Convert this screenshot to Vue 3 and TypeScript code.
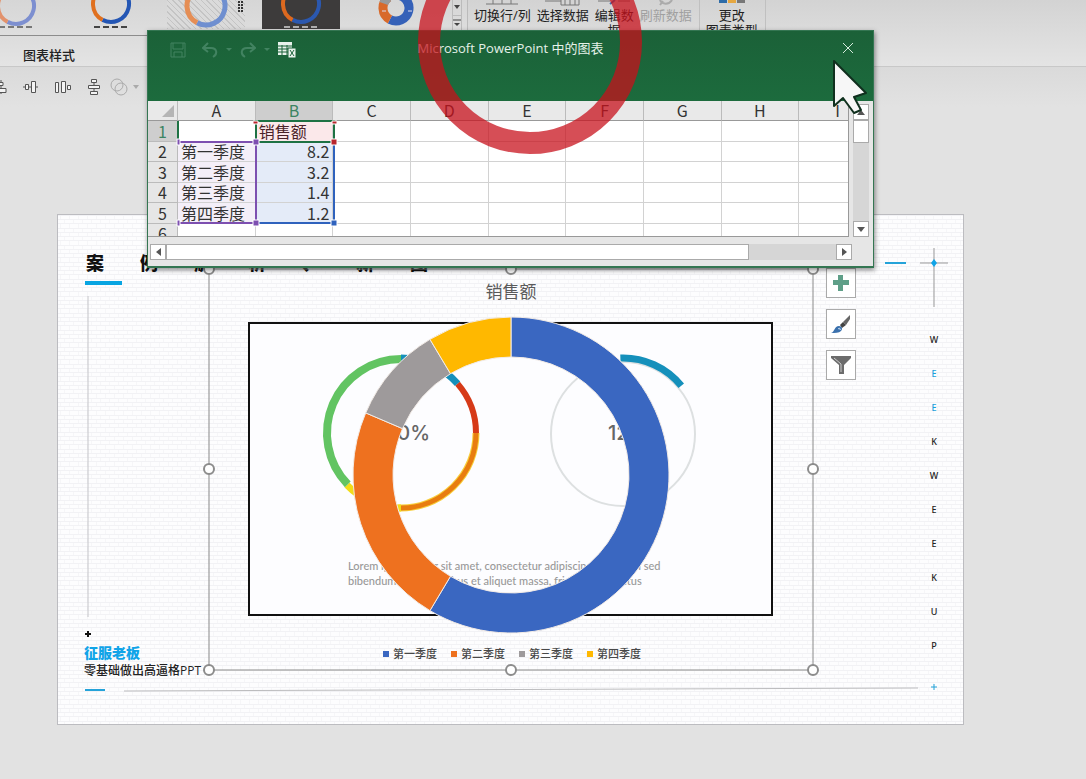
<script setup lang="ts">
interface Quarter { name: string; value: number; color: string }

const quarters: Quarter[] = [
  { name: '第一季度', value: 8.2, color: '#3a67c1' },
  { name: '第二季度', value: 3.2, color: '#ee711f' },
  { name: '第三季度', value: 1.4, color: '#9e9a9b' },
  { name: '第四季度', value: 1.2, color: '#ffb800' },
]

const point = (cx: number, cy: number, r: number, deg: number): string => {
  const a = (deg * Math.PI) / 180
  return `${(cx + r * Math.sin(a)).toFixed(2)} ${(cy - r * Math.cos(a)).toFixed(2)}`
}

const arc = (cx: number, cy: number, r: number, from: number, to: number): string =>
  `M${point(cx, cy, r, from)} A${r} ${r} 0 ${to - from > 180 ? 1 : 0} 1 ${point(cx, cy, r, to)}`

const wedge = (cx: number, cy: number, outer: number, inner: number, from: number, to: number): string => {
  const large = to - from > 180 ? 1 : 0
  return `M${point(cx, cy, outer, from)} A${outer} ${outer} 0 ${large} 1 ${point(cx, cy, outer, to)} ` +
    `L${point(cx, cy, inner, to)} A${inner} ${inner} 0 ${large} 0 ${point(cx, cy, inner, from)} Z`
}

const total = quarters.reduce((sum, q) => sum + q.value, 0)
let angle = 0
const slices = quarters.map((q) => {
  const start = angle
  angle += (q.value / total) * 360
  return { color: q.color, d: wedge(302, 206, 158, 118, start, angle) }
})

const columns = ['A', 'B', 'C', 'D', 'E', 'F', 'G', 'H', 'I']
const rows: string[][] = [
  ['', '销售额'],
  ...quarters.map((q) => [q.name, q.value.toFixed(1)]),
  ['', ''],
]

const thumbs = [
  { kind: 'plain faded', cy: 6, r: 18, w: 4, left: '#e2926c', right: '#7d8fd0' },
  { kind: 'plain', cy: 4, r: 18, w: 4, left: '#e0701f', right: '#2456b4' },
  { kind: 'hatched', cy: 6, r: 19, w: 5, left: '#e58e55', right: '#6f8fd0' },
  { kind: 'dark', cy: 4, r: 18, w: 4, left: '#dd691f', right: '#2b58b0' },
  { kind: 'solid', cy: 8, r: 13, w: 9, left: '#d8692a', right: '#3561b8' },
]

const title = ['案', '例', '解', '析', '、', '新', '图']
const letters = 'WEEKWEEKUP'.split('')
const handles = [
  [0, 0], [302, 0], [604, 0], [0, 200], [604, 200], [0, 401], [302, 401], [604, 401],
]
</script>

<template>
  <div class="app">
    <header class="ribbon">
      <section class="styles-group">
        <div class="gallery">
          <button v-for="(t, i) in thumbs" :key="i" class="thumb" :class="t.kind" :aria-label="`样式 ${i + 1}`">
            <svg width="78" height="29" viewBox="0 0 78 29" fill="none">
              <path :d="arc(39, t.cy, t.r, 0, 208)" :stroke="t.right" :stroke-width="t.w" />
              <path :d="arc(39, t.cy, t.r, 208, 325)" :stroke="t.left" :stroke-width="t.w" />
              <path v-if="t.kind === 'solid'" :d="arc(39, t.cy, t.r, 290, 325)" stroke="#999" :stroke-width="t.w" />
              <path v-if="t.kind === 'solid'" d="M25 11h4M51 11h4" stroke="#dde" />
              <path v-if="t.kind !== 'solid' && t.kind !== 'hatched'" d="M22 27h33" :stroke="t.kind === 'dark' ? '#bbb' : '#333'" stroke-width="2" stroke-dasharray="6 3" :opacity="t.kind === 'plain faded' ? 0.6 : 0.9" />
              <path v-if="t.kind === 'hatched'" d="M72 1v12M75 1v12" stroke="#333" stroke-width="2" stroke-dasharray="2 1" />
            </svg>
          </button>
          <div class="gallery-nav">
            <button aria-label="向下"><svg width="8" height="6"><path d="M1 1h6L4 5z" fill="#444" /></svg></button>
            <button aria-label="更多"><svg width="8" height="8"><path d="M0 1h8" stroke="#444" /><path d="M1 4h6L4 7z" fill="#444" /></svg></button>
          </div>
        </div>
        <h2 class="group-label">图表样式</h2>
      </section>
      <section class="commands data-group">
        <button class="command">
          <svg width="32" height="6"><path d="M0 4h32M7 0v4M16 0v4M25 0v4" stroke="#777" /></svg>
          <span>切换行/列</span>
        </button>
        <button class="command">
          <svg width="36" height="6"><path d="M0 1h16M16 0v5h18V0M20 0v5M25 0v5M30 0v5" stroke="#777" fill="none" /></svg>
          <span>选择数据</span>
        </button>
        <button class="command narrow">
          <svg width="32" height="6"><path d="M0 1h12M20 1h12" stroke="#777" /><path d="M12 4l5-4" stroke="#3c6db0" stroke-width="2" /></svg>
          <span>编辑数据</span>
        </button>
        <button class="command" disabled>
          <svg width="18" height="6"><path d="M3 0c2 5 9 5 12 0M3 5l3-4" stroke="#aaa" stroke-width="2" fill="none" /></svg>
          <span>刷新数据</span>
        </button>
      </section>
      <section class="commands type-group">
        <button class="command">
          <svg width="26" height="6"><path d="M0 0h8v3H0z" fill="#2e6ca8" /><path d="M9 0h8v3H9z" fill="#e6a740" /><path d="M18 0h8v3h-8z" fill="#777" /></svg>
          <span>更改<br>图表类型</span>
        </button>
      </section>
    </header>

    <nav class="quickbar" aria-label="对齐">
      <button aria-label="左对齐"><svg width="8" height="18" fill="#f4f4f4" stroke="#555"><path d="M1 2v14" /><path d="M-3 4.500h6v3h-6zM-3 10.500h9v4h-9z" /></svg></button>
      <button aria-label="水平居中"><svg width="16" height="18" fill="#f4f4f4" stroke="#555"><path d="M0 9h2M6 9h3M13 9h2" /><path d="M2.500 6.500h3v5h-3zM8.500 3.500h4v11h-4z" /></svg></button>
      <button aria-label="横向分布"><svg width="18" height="18" fill="#f4f4f4" stroke="#555"><path d="M1.500 4.500h3v10h-3zM7.500 3.500h4v11h-4zM13.500 7.500h3v4h-3z" /></svg></button>
      <button class="spaced" aria-label="纵向分布"><svg width="14" height="18" fill="#f4f4f4" stroke="#555"><path d="M7 4v10" /><path d="M4.500 1.500h5v3h-5zM1.500 7.500h11v3h-11zM3.500 13.500h7v3h-7z" /></svg></button>
      <button aria-label="合并形状"><svg width="18" height="18" fill="none" stroke="#aaa"><circle cx="7" cy="7" r="6" /><circle cx="11" cy="11" r="6" /></svg></button>
      <button aria-label="更多选项"><svg width="6" height="4"><path d="M0 0h6L3 4z" fill="#aaa" /></svg></button>
    </nav>

    <main class="workspace">
      <article class="slide">
        <svg class="bricks" width="100%" height="100%" aria-hidden="true">
          <defs>
            <pattern id="brick" width="9" height="17" patternUnits="userSpaceOnUse">
              <path d="M0 0h9v1H0zM0 4h9v1H0zM0 8h9v1H0zM0 13h9v1H0z" fill="#f2f2f5" />
              <path d="M2 1h1v3H2zM6 5h1v3H6zM2 9h1v4H2zM6 14h1v3H6z" fill="#f6f6f8" />
            </pattern>
          </defs>
          <rect width="100%" height="100%" fill="url(#brick)" />
        </svg>
        <svg class="decor" width="905" height="509" aria-hidden="true">
          <path d="M27 68h37" stroke="#08a5e2" stroke-width="4" />
          <path d="M30 81v321" stroke="#c4c4c8" />
          <path d="M27 475h20M827 48h21" stroke="#25a3d9" stroke-width="2" />
          <path d="M66 476L860 473" stroke="#bcbcbe" />
          <path d="M862 48h28M876 33v59" stroke="#999" />
          <path d="M876 44l3 4-3 4-3-4z" fill="#10a4e8" />
          <path d="M27 419h6M30 416v6" stroke="#111" stroke-width="2" />
          <path d="M873 472h6M876 469v6" stroke="#25a3d9" />
        </svg>
        <h1 class="slide-title"><span v-for="(c, i) in title" :key="i">{{ c }}</span></h1>
        <ul class="letters">
          <li v-for="(c, i) in letters" :key="i" :class="{ blue: i === 1 || i === 2 }">{{ c }}</li>
        </ul>
        <div class="brand">
          <strong>征服老板</strong>
          <span>零基础做出高逼格PPT</span>
        </div>

        <figure class="picture">
          <svg width="521" height="290" viewBox="250 324 521 290" fill="none">
            <path :d="arc(401, 433, 75, 0, 49)" stroke="#1590bb" stroke-width="7" />
            <path :d="arc(401, 433, 75, 49, 90)" stroke="#d63a18" stroke-width="6" />
            <path :d="arc(401, 433, 75, 90, 182)" stroke="#f8cf3c" stroke-width="7" />
            <path :d="arc(401, 433, 75, 90, 180)" stroke="#e87d10" stroke-width="5" />
            <path :d="arc(401, 433, 75, 180, 226)" stroke="#f2dc18" stroke-width="7" />
            <path :d="arc(401, 433, 74, 226, 360)" stroke="#62c462" stroke-width="8" />
            <circle cx="623" cy="434" r="72" stroke="#dde0e1" stroke-width="2" />
            <path :d="arc(623, 433, 75, 358, 411)" stroke="#1590bb" stroke-width="7" />
            <text class="percent" x="430" y="440" text-anchor="end">100%</text>
            <text class="percent" x="608" y="440">12%</text>
            <text class="lorem" x="348" y="570">Lorem ipsum dolor sit amet, consectetur adipiscing elit. Proin sed</text>
            <text class="lorem" x="348" y="585">bibendum tellus, dapibus et aliquet massa, fringilla nec luctus</text>
          </svg>
        </figure>

        <section class="chart">
          <h2>销售额</h2>
          <svg class="donut" width="604" height="401" role="img" aria-label="销售额圆环图">
            <path v-for="s in slices" :key="s.color" :d="s.d" :fill="s.color" stroke="#f2ebe6" stroke-width="1" stroke-linejoin="round" />
          </svg>
          <ul class="legend">
            <li v-for="q in quarters" :key="q.name"><svg width="6" height="6"><rect width="6" height="6" :fill="q.color" /></svg>{{ q.name }}</li>
          </ul>
          <svg class="frame" width="620" height="417" viewBox="-8 -8 620 417" fill="none" aria-hidden="true">
            <rect width="604" height="401" stroke="#8a8a8a" stroke-width="1" />
            <circle v-for="(h, i) in handles" :key="i" :cx="h[0]" :cy="h[1]" r="5" fill="#fff" stroke="#8c8c8c" stroke-width="2" />
          </svg>
        </section>
        <div class="chart-tools">
          <button aria-label="图表元素"><svg width="16" height="16"><path d="M5 0h5v5h6v5h-6v6H5v-6H0V5h5z" fill="#5f9f88" /></svg></button>
          <button aria-label="图表样式"><svg width="20" height="20"><path d="M19 1L12 8l3 3 4-6z" fill="#666" /><path d="M12 8l-3 3 2 3 4-3z" fill="#444" /><path d="M0 19c4-1 3-7 8-7 3 0 4 3 2 5-2 2-6 2-10 2z" fill="#3b71ad" /><path d="M7 15c1-1 3-1 2 1" stroke="#d9e8f6" fill="none" /></svg></button>
          <button aria-label="图表筛选器"><svg width="20" height="20"><path d="M0 1h20v2l-7 7v9H8v-9L0 3z" fill="#6c6c6c" /><path d="M3 3l7 6v8" stroke="#ccc" fill="none" /></svg></button>
        </div>
      </article>
    </main>

    <section class="window" aria-label="Microsoft PowerPoint 中的图表">
      <div class="titlebar">
        <div class="qat">
          <button aria-label="保存"><svg width="16" height="18" fill="none" stroke="#428361"><path d="M1 2h14v14H1zM3 2v6h10V2M4 16v-5h8v5" /></svg></button>
          <button class="gap-before" aria-label="撤消"><svg width="16" height="16" fill="none" stroke="#428361" stroke-width="2"><path d="M6 1L1 6l5 4M2 6h7c6 0 7 6 2 9" /></svg></button>
          <button aria-label="撤消选项"><svg width="6" height="4"><path d="M0 0h6L3 3z" fill="#428361" /></svg></button>
          <button aria-label="恢复"><svg width="16" height="16" fill="none" stroke="#428361" stroke-width="2"><path d="M10 1l5 5-5 4M14 6H7C1 6 0 12 5 15" /></svg></button>
          <button aria-label="恢复选项"><svg width="6" height="4"><path d="M0 0h6L3 3z" fill="#428361" /></svg></button>
          <button aria-label="编辑数据"><svg width="20" height="18"><path d="M0 1h14v13H0z" fill="#e9f3ec" /><path d="M0 5h14M0 8h14M0 11h14M4 4v10M9 4v10" stroke="#1b6339" /><path d="M10 7h8v10h-8z" fill="#e9f3ec" stroke="#1b6339" /><path d="M12 9l4 6M16 9l-4 6" stroke="#1b6339" /></svg></button>
        </div>
        <h2>Microsoft PowerPoint 中的图表</h2>
        <button class="close" aria-label="关闭"><svg width="12" height="12"><path d="M1 1l10 10M11 1L1 11" stroke="#d6ecdd" /></svg></button>
      </div>
      <div class="sheet-body">
        <div class="sheet-view">
          <table>
            <thead>
              <tr>
                <th class="corner"><svg width="12" height="12"><path d="M12 0v12H0z" fill="#b5b5b5" /></svg></th>
                <th v-for="c in columns" :key="c" :class="{ active: c === 'B' }" scope="col">{{ c }}</th>
              </tr>
            </thead>
            <tbody>
              <tr v-for="(r, i) in rows" :key="i">
                <th scope="row" :class="{ active: i === 0 }">{{ i + 1 }}</th>
                <td v-for="(c, j) in columns" :key="c" :class="{ name: j === 0 && i > 0 && i < 5, series: j === 1 && i === 0, value: j === 1 && i > 0 && i < 5 }">{{ r[j] ?? '' }}</td>
              </tr>
            </tbody>
          </table>
          <svg class="ranges" width="200" height="136" fill="none" aria-hidden="true">
            <path d="M30 20v20M108 20h78v21h-78z" stroke="#1e7244" stroke-width="2" />
            <path d="M30 41h77M108 44v78M30 122h76" stroke="#7d4fb0" stroke-width="2" />
            <path d="M110 122h76V44" stroke="#2f62bd" stroke-width="2" />
            <g stroke="#fff">
              <path d="M105 38h6v6h-6zM105 119h6v6h-6zM29 38h3v6h-3zM29 119h3v6h-3z" fill="#7d4fb0" />
              <path d="M183 119h6v6h-6z" fill="#2f62bd" />
              <path d="M183 38h6v6h-6zM105 20h5v3h-5zM184 20h5v3h-5z" fill="#b8252c" />
            </g>
          </svg>
        </div>
        <div class="vscroll">
          <button aria-label="向上滚动"><svg width="8" height="5"><path d="M0 5h8L4 0z" fill="#555" /></svg></button>
          <div class="thumb-v"></div>
          <button class="end" aria-label="向下滚动"><svg width="8" height="5"><path d="M0 0h8L4 5z" fill="#555" /></svg></button>
        </div>
      </div>
      <div class="hscroll">
        <button aria-label="向左滚动"><svg width="5" height="8"><path d="M5 0v8L0 4z" fill="#555" /></svg></button>
        <div class="thumb-h"></div>
        <button class="end" aria-label="向右滚动"><svg width="5" height="8"><path d="M0 0v8l5-4z" fill="#555" /></svg></button>
      </div>
    </section>

    <svg class="pointer" width="460" height="160" fill="none" aria-hidden="true">
      <circle cx="117" cy="42" r="101" stroke="#c8101b" stroke-opacity="0.74" stroke-width="22" />
      <path d="M421 61v45l9-8 11 15 7-3-7-13 12-4z" fill="#f7f7f7" stroke="#10301e" stroke-width="2" stroke-linejoin="round" />
    </svg>
  </div>
</template>

<style>
body { background: #e2e2e2; }
</style>

<style scoped>
.app {
  position: relative;
  min-height: 100vh;
  overflow: hidden;
  background: #e2e2e2;
  color: #222;
  font-family: "Open Sans", "Noto Sans CJK SC", sans-serif;
  font-size: 13px;
}
.app * { box-sizing: border-box; }
button { padding: 0; border: 0; background: none; font: inherit; color: inherit; display: flex; align-items: center; justify-content: center; }
h1, h2, ul, figure { margin: 0; padding: 0; font-weight: 400; list-style: none; }
svg { display: block; flex: none; }

.ribbon { display: flex; height: 67px; overflow: hidden; background: linear-gradient(#d3d3d3, #e4e4e4); border-bottom: 1px solid #c8c8c8; }
.styles-group { width: 468px; border-right: 1px solid #bbb; }
.gallery { display: flex; gap: 16px; height: 36px; padding-right: 8px; border-bottom: 1px solid #8c8c8c; background: linear-gradient(#d6d6d6, #dedede); }
.thumb { width: 78px; height: 29px; margin-right: 1px; }
.thumb:first-child { margin-left: -23px; }
.thumb.hatched { background: repeating-linear-gradient(45deg, #c4c4c4 0 1px, #dadada 1px 4px); }
.thumb.dark { background: #3d3b3b; }
.gallery-nav { display: flex; flex-direction: column; width: 15px; height: 31px; margin-left: auto; border: 1px solid #bbb; border-top: 0; }
.gallery-nav button { flex: 1; }
.gallery-nav button + button { border-top: 1px solid #bbb; }
.group-label { padding-left: 23px; font-size: 13px; line-height: 38px; font-weight: 500; }
.commands { display: flex; gap: 6px; align-items: flex-start; padding: 0 7px 0 6px; border-right: 1px solid #c0c0c0; }
.command { flex-direction: column; gap: 2px; line-height: 15px; white-space: nowrap; }
.command span { text-align: center; }
.command.narrow span { width: 39px; white-space: normal; }
.command:disabled { color: #a0a0a0; }

.quickbar { display: flex; align-items: center; gap: 15px; height: 40px; background: linear-gradient(#dadada, #e2e2e2); }
.quickbar .spaced { margin-right: -6px; }
.quickbar button:last-child { margin-left: -10px; }

.workspace { padding: 107px 57px 48px; }
.slide { position: relative; width: 907px; height: 511px; border: 1px solid #bcbcc0; background: #fdfdfe; }
.bricks, .decor { position: absolute; left: 0; top: 0; }
.slide-title { position: absolute; left: 28px; top: 36px; display: flex; gap: 36px; font-size: 18px; line-height: 24px; color: #111; }
.slide-title span { width: 18px; font-weight: 900; }
.letters { position: absolute; left: 866px; top: 108px; width: 20px; text-align: center; font-size: 9px; font-weight: 500; line-height: 34px; font-family: "Noto Sans", sans-serif; }
.letters .blue { color: #1ba0dc; }
.brand { position: absolute; left: 26px; top: 429px; display: flex; flex-direction: column; line-height: 18px; font-size: 12px; font-weight: 500; white-space: nowrap; }
.brand strong { font-size: 14px; font-weight: 900; color: #10a4e8; }
.picture { position: absolute; left: 190px; top: 107px; border: 2px solid #111; background: #fdfdff; }
.percent { font: 500 20px Inter, sans-serif; fill: #666; }
.lorem { font: 500 11px Lato, sans-serif; fill: #999; }
.chart { position: absolute; left: 151px; top: 54px; width: 604px; height: 401px; }
.chart h2 { padding-top: 10px; text-align: center; font-size: 17px; line-height: 26px; color: #5a5a5a; }
.donut { position: absolute; left: 0; top: 0; }
.legend { position: absolute; left: 174px; bottom: 7px; display: flex; gap: 14px; font-size: 11px; font-weight: 500; line-height: 18px; color: #484848; }
.legend li { display: flex; align-items: center; gap: 4px; }
.frame { position: absolute; left: -8px; top: -8px; }
.chart-tools { position: absolute; left: 768px; top: 53px; display: flex; flex-direction: column; gap: 11px; }
.chart-tools button { width: 30px; height: 30px; border: 1px solid #aaa; background: #fff; }

.window { position: absolute; left: 147px; top: 30px; width: 727px; border: 1px solid #347652; border-bottom-width: 2px; background: #e6e6e6; box-shadow: 1px 2px 5px rgba(0, 0, 0, 0.45); }
.titlebar { display: grid; grid-template-columns: 1fr auto 1fr; height: 70px; background: linear-gradient(#1b6138, #1c6b3d); color: #e5f1e9; }
.titlebar h2 { padding-top: 8px; font-size: 13px; line-height: 18px; }
.qat { display: flex; align-items: center; gap: 8px; height: 38px; padding-left: 22px; }
.qat .gap-before { margin-left: 8px; }
.close { justify-self: end; width: 50px; height: 34px; }
.sheet-body { display: flex; justify-content: space-between; }
.sheet-view { position: relative; flex: 1; height: 136px; overflow: hidden; border-right: 1px solid #999; border-bottom: 1px solid #999; }
table { width: 729px; table-layout: fixed; border-spacing: 0; font: 16px/19px "Noto Sans CJK SC", sans-serif; color: #333; }
th, td { height: 20px; padding: 0; font-weight: 400; border: 0 solid #d2d2d2; border-width: 0 1px 1px 0; white-space: nowrap; }
thead th { border-color: #aaa #bbb #999; background: #e9e9e9; }
.corner { width: 30px; }
.corner svg { margin-left: 14px; }
tbody tr:nth-child(odd) th, tbody tr:nth-child(odd) td { height: 21px; }
tbody th { background: #e6e6e6; border-color: #bbb; }
thead th.active, tbody th.active { background: #cecece; color: #3c8463; }
td { background: #fff; padding: 0 3px; }
td.name { background: #f4eff8; }
td.series { background: #fbe8ea; color: #4a2228; }
td.value { background: #e4ebf8; text-align: right; }
.ranges { position: absolute; left: 0; top: 0; }
.vscroll { display: flex; flex-direction: column; width: 16px; margin: 3px 4px 0 4px; background: #d6d6d6; }
.vscroll button, .hscroll button { width: 16px; height: 16px; border: 1px solid #aaa; background: #fff; }
.thumb-v { height: 23px; border: 1px solid #aaa; background: #fff; }
.vscroll .end { margin-top: auto; }
.hscroll { display: flex; height: 16px; margin: 7px 21px 6px 2px; background: #d6d6d6; }
.thumb-h { width: 83%; border: 1px solid #aaa; background: #fff; }
.hscroll .end { margin-left: auto; }
.pointer { position: absolute; left: 413px; top: 0; pointer-events: none; }
</style>
